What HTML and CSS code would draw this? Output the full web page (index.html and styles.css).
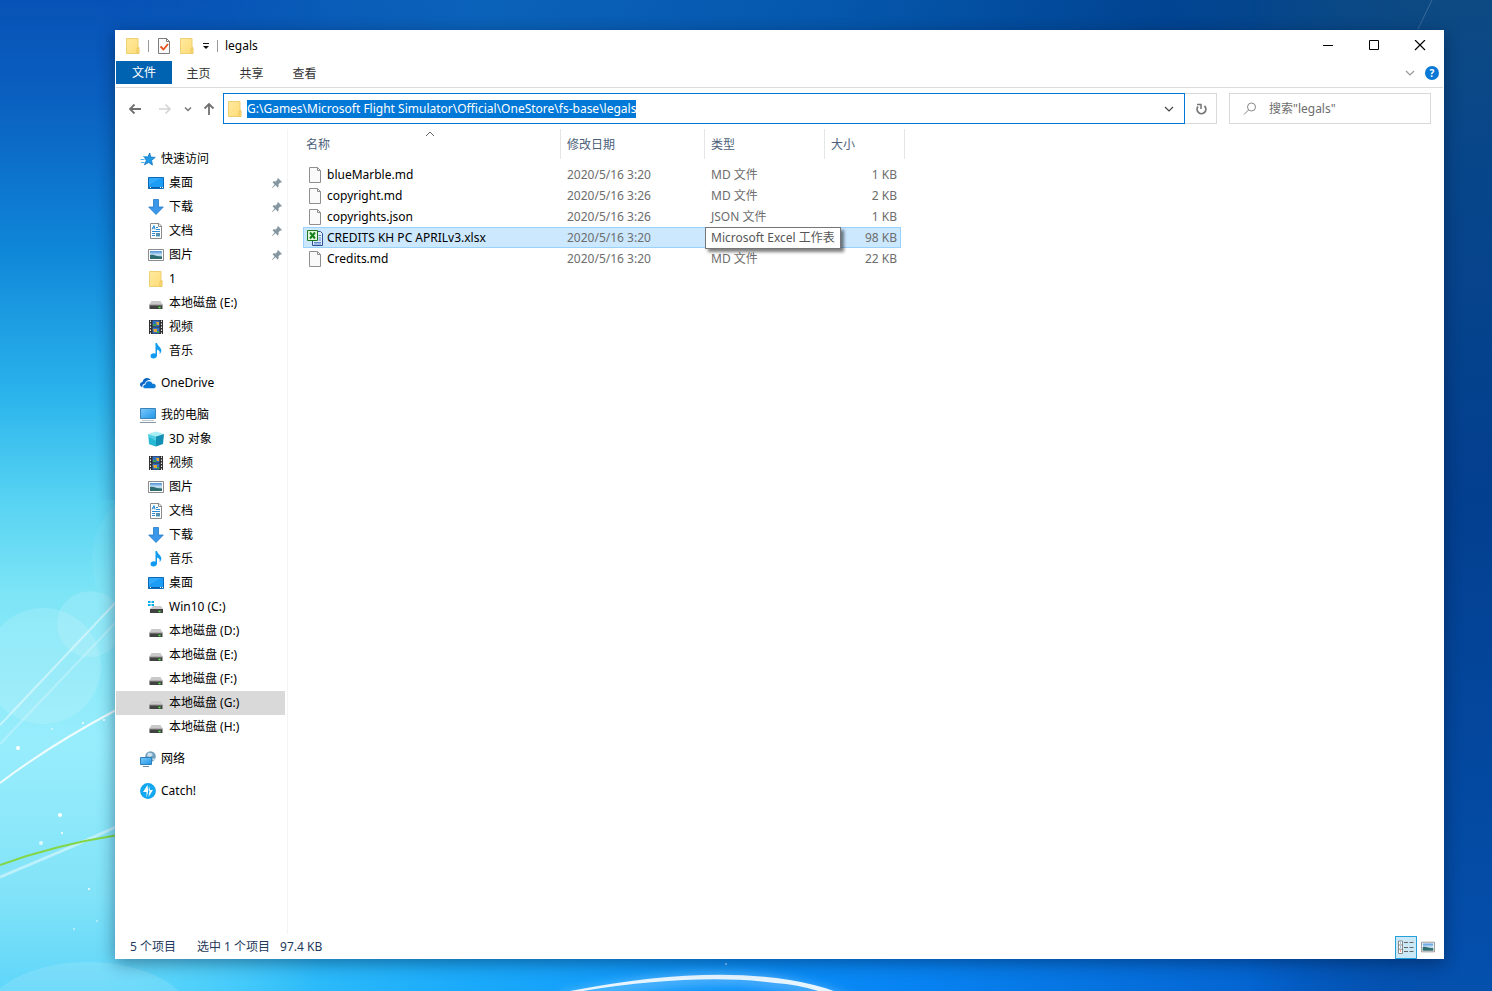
FILE: index.html
```html
<!DOCTYPE html>
<html lang="zh-CN">
<head>
<meta charset="utf-8">
<title>legals</title>
<link rel="stylesheet" href="styles.css">
</head>
<body>
<svg class="defs" aria-hidden="true">
  <defs>
    <linearGradient id="gFolder" x1="0" y1="0" x2="1" y2="1"><stop offset="0" stop-color="#ffeaa0"/><stop offset="1" stop-color="#ffdc78"/></linearGradient>
    <linearGradient id="gScreen" x1="0" y1="0" x2="1" y2="1"><stop offset="0" stop-color="#7cc9f8"/><stop offset="1" stop-color="#1f96ea"/></linearGradient>
    <linearGradient id="gPhoto" x1="0" y1="0" x2="0" y2="1"><stop offset="0" stop-color="#4a90d9"/><stop offset=".5" stop-color="#cfe8f5"/><stop offset="1" stop-color="#2f6f78"/></linearGradient>
    <symbol id="folder" viewBox="0 0 16 16"><path d="M1.500.5h11.500v15H1.500z" fill="url(#gFolder)" stroke="#efd070"/><path d="M12 10.500l2-1v6h-2z" fill="#ffdf80" stroke="#e8c55e"/></symbol>
    <symbol id="check" viewBox="0 0 16 16"><path d="M2.500.5h8l3 3v12h-11z" fill="#fbfbfb" stroke="#7b7b7b"/><path d="M10.500.5v3h3" fill="none" stroke="#7b7b7b"/><path d="M4.500 8.500l3 3L12 6" fill="none" stroke="#e8501c" stroke-width="1.800"/></symbol>
    <symbol id="star" viewBox="0 0 16 16"><path d="M9.800 2l.8 4 4.600.4-3.600 2.900.8 4.700-3.800-2.500-4.200 2.300 1.900-4.400L4.500 6.300l3.200-.2z" fill="#1e9be8" stroke="#1470b8" stroke-width=".8"/><path d="M3 5.500h4M.5 8.500h4M1 11.500h3.500" stroke="#4fb4ef"/></symbol>
    <symbol id="desktop" viewBox="0 0 16 16"><path d="M.5 2.500h15v11H.5z" fill="#1b9cf5" stroke="#0b6ab5"/><path d="M1 12.500h14" stroke="#0a5ea8"/><path d="M2 12.500h1M12 12.500h1m1 0h1" stroke="#fff"/><path d="M1 10L13 3H1z" fill="#42b0ff" opacity=".6"/></symbol>
    <symbol id="down" viewBox="0 0 16 16"><path d="M5.500.5h5v7.500h4.800L8 15.500.7 8h4.800z" fill="#3a97ea" stroke="#2378c4" stroke-width=".8"/></symbol>
    <symbol id="doc" viewBox="0 0 16 16"><path d="M2.500.5h8.500l2.500 2.500v12.500h-11z" fill="#fff" stroke="#8b8b8b"/><path d="M10.500.5v3h3" fill="none" stroke="#8b8b8b"/><path d="M4 6.500l2-4 1 4M4.500 5h2M8 4.500h2M8 6.500h4M4 8.500h8M4 10.500h3M4 12.500h3" fill="none" stroke="#2b8ad0"/><path d="M8 10h4v3.500H8z" fill="#4f93b5"/></symbol>
    <symbol id="picture" viewBox="0 0 16 16"><path d="M.5 2.500h15v11H.5z" fill="#fff" stroke="#8b8b8b"/><path d="M2 4h12v8H2z" fill="url(#gPhoto)"/><path d="M2 8c4-1 7 2 12 1.500V12H2z" fill="#2e6e70"/></symbol>
    <symbol id="drive" viewBox="0 0 16 16"><path d="M3.500 6h9L15 10H1z" fill="#c9c9c9"/><path d="M1.500 10h13v4h-13z" fill="#424242"/><path d="M1.500 10h13" stroke="#929292"/><path d="M10.500 12.500h2" stroke="#4cf04a" stroke-width="1.500"/></symbol>
    <symbol id="windrive" viewBox="0 0 16 16"><path d="M0 2h2.500v2H0zm3.500 0H6v2H3.500zM0 5h2.500v2H0zm3.500 0H6v2H3.500z" fill="#00adef"/><path d="M5 7h8l2 3H2z" fill="#c9c9c9"/><path d="M2 10h13v4H2z" fill="#424242"/><path d="M10.500 12.500h2" stroke="#4cf04a" stroke-width="1.500"/></symbol>
    <symbol id="video" viewBox="0 0 16 16"><path d="M1 1h14v14H1z" fill="#303030"/><path d="M2.500 1.500v14M13.500 1.500v14" stroke="#eee" stroke-dasharray="1.500 1.500"/><path d="M4.500 1.500h7v6h-7zM4.500 8.500h7v6h-7z" fill="#356fc5"/><path d="M8 3h3v3H9zM5 10h4v3H6z" fill="#e1aa37"/><path d="M5 5h3v2H5zM9 12h2v2H9z" fill="#3ba350"/></symbol>
    <symbol id="music" viewBox="0 0 16 16"><path d="M7.500 0h1.500c.4 3 4.800 4.500 4.300 8-.2 1.400-.9 2.500-1.800 3 .8-2.500-.2-3.800-2.500-4.500v6c0 2-1.800 3-3.600 3S2.500 14.500 2.500 13s1.600-2.800 3.500-2.700c.7 0 1.100.2 1.500.4z" fill="#109bf0"/></symbol>
    <symbol id="onedrive" viewBox="0 0 16 16"><path d="M1.800 12C.6 11.500 0 10.600 0 9.500 0 8 1.200 7 2.500 7 3 4.500 4.800 3 7 3c1.700 0 3 .8 3.700 2-3-.4-5 1-5.600 3.500C3 8.800 2 10.500 2.500 12.500z" fill="#0d67c2"/><path d="M5 13.500c-1.200 0-2-.9-2-2s.9-2.100 2.200-2.100C5.500 7.200 7 6 9 6c1.700 0 3 1 3.500 2.500 2.300-.2 3.500 1 3.500 2.500s-1 2.500-2.500 2.500z" fill="#0a78d6" stroke="#fff" stroke-width=".5"/></symbol>
    <symbol id="pc" viewBox="0 0 16 16"><path d="M.5 1.500h15v10H.5z" fill="url(#gScreen)" stroke="#3b82b8"/><path d="M2 13.500h12" stroke="#bfcbd4"/><path d="M0 15.500h16" stroke="#8295a3"/></symbol>
    <symbol id="cube" viewBox="0 0 16 16"><path d="M0 3l8-2.500L16 3 8 5.500z" fill="#a8eef5"/><path d="M0 3l8 2.500v10L1 13z" fill="#4fd0e2"/><path d="M16 3L8 5.500v10l7-2.500z" fill="#128fb5"/><path d="M1 6l7 4v5.500L1 13z" fill="#27b8d4"/></symbol>
    <symbol id="network" viewBox="0 0 16 16"><circle cx="10.500" cy="5.500" r="5.300" fill="#6f9fbd"/><path d="M8 2c2-.5 4 0 5 2l-3 2-3-1zM12 8l3-1-1 3z" fill="#cfe3ee"/><path d="M.5 6.500h11v7H.5z" fill="url(#gScreen)" stroke="#2f7fb8"/><path d="M3 15.500h6" stroke="#6b8ca3"/></symbol>
    <symbol id="catch" viewBox="0 0 16 16"><circle cx="8" cy="8" r="7.900" fill="#12a7ee"/><path d="M7.500 2L3 9h3.500v5.500L8 9V6.500zM9 3l-.5 4.500h1L8.500 14 13 7h-3z" fill="#fff"/></symbol>
    <symbol id="pin" viewBox="0 0 12 12"><path d="M7 1l4 4-1 .8-.8-.2L7.500 7.500l.2 2-1 1L4.500 8.300 1 11.200l-.3-.3L3.600 7.400 1.500 5.300l1-1 2 .2L6.400 2.800 6.200 2z" fill="#8797a2"/></symbol>
    <symbol id="file" viewBox="0 0 16 16"><path d="M2.500.5h8l3 3v12h-11z" fill="#fafafa" stroke="#8f8f8f"/><path d="M10.500.5v3h3" fill="none" stroke="#8f8f8f"/></symbol>
    <symbol id="excel" viewBox="0 0 16 16"><path d="M5.500 1.500h8l2 2v12h-10z" fill="#e3ecfa" stroke="#2f4f96"/><path d="M7 12.500h7M7 14h7M11.500 5.500H14M11.500 8H14M11.500 10H14" stroke="#5b87cc"/><path d="M.5.500h10v10H.5z" fill="#e6f5e1" stroke="#1c7a1a"/><path d="M3 2.500l5 6M8 2.500l-5 6" stroke="#16821b" stroke-width="2"/></symbol>
  </defs>
</svg>

<svg class="wallpaper" viewBox="0 0 1492 991" preserveAspectRatio="none" aria-hidden="true">
  <defs>
    <linearGradient id="wTop"><stop offset="0" stop-color="#0650b5"/><stop offset=".32" stop-color="#0b62b9"/><stop offset=".55" stop-color="#0558ae"/><stop offset=".78" stop-color="#014492"/><stop offset="1" stop-color="#0d4a83"/></linearGradient>
    <linearGradient id="wLeft" x1="0" y1="0" x2="0" y2="1"><stop offset="0" stop-color="#0752b6"/><stop offset=".1" stop-color="#0a60c0"/><stop offset=".25" stop-color="#0f86d8"/><stop offset=".4" stop-color="#2bb4ec"/><stop offset=".5" stop-color="#55d2f2"/><stop offset=".6" stop-color="#7de5f6"/><stop offset=".75" stop-color="#98edfc"/><stop offset=".9" stop-color="#82e3f8"/><stop offset="1" stop-color="#5fd6fa"/></linearGradient>
    <linearGradient id="wBottom"><stop offset="0" stop-color="#72ddf8"/><stop offset=".12" stop-color="#3cc9fb"/><stop offset=".3" stop-color="#1cacfa"/><stop offset=".5" stop-color="#0a90fa"/><stop offset=".62" stop-color="#0782f0"/><stop offset=".85" stop-color="#0463cf"/><stop offset="1" stop-color="#0450ad"/></linearGradient>
    <linearGradient id="wRight" x1="0" y1="0" x2="0" y2="1"><stop offset="0" stop-color="#0d4a83"/><stop offset=".15" stop-color="#08468a"/><stop offset=".5" stop-color="#033f8f"/><stop offset="1" stop-color="#0450ad"/></linearGradient>
    <linearGradient id="fadeL"><stop offset="0" stop-color="#fff"/><stop offset=".3" stop-color="#fff"/><stop offset="1" stop-color="#000"/></linearGradient>
    <linearGradient id="fadeR"><stop offset="0" stop-color="#000"/><stop offset=".7" stop-color="#fff"/><stop offset="1" stop-color="#fff"/></linearGradient>
    <mask id="maskL"><path d="M0 0h320v991H0z" fill="url(#fadeL)"/></mask>
    <mask id="maskR"><path d="M1250 0h242v991h-242z" fill="url(#fadeR)"/></mask>
    <filter id="soft" x="-20%" y="-50%" width="140%" height="200%"><feGaussianBlur stdDeviation="6"/></filter>
  </defs>
  <path d="M0 0h1492v500H0z" fill="url(#wTop)"/>
  <path d="M0 500h1492v491H0z" fill="url(#wBottom)"/>
  <path d="M0 0h320v991H0z" fill="url(#wLeft)" mask="url(#maskL)"/>
  <path d="M1250 0h242v991h-242z" fill="url(#wRight)" mask="url(#maskR)"/>
  <g fill="#fff">
    <circle cx="43" cy="666" r="58" opacity=".13"/>
    <circle cx="90" cy="624" r="33" opacity=".13"/>
    <circle cx="170" cy="560" r="78" opacity=".05"/>
    <ellipse cx="88" cy="1020" rx="105" ry="58" opacity=".12"/>
    <circle cx="18" cy="748" r="2"/><circle cx="60" cy="815" r="2"/><circle cx="62" cy="833" r="1"/><circle cx="41" cy="843" r="2" opacity=".7"/><circle cx="83" cy="723" r="1"/><circle cx="104" cy="720" r="1"/><circle cx="52" cy="729" r="1" opacity=".6"/><circle cx="89" cy="889" r="1"/><circle cx="74" cy="929" r="1" opacity=".6"/><circle cx="97" cy="921" r="1" opacity=".5"/><circle cx="726" cy="964" r="1" opacity=".6"/>
  </g>
  <g fill="none" stroke="#fff">
    <path d="M0 725L118 600" stroke-width="2" opacity=".45"/>
    <path d="M0 744L118 620" stroke-width="2" opacity=".25"/>
    <path d="M0 783Q50 745 118 709" stroke-width="2" opacity=".85"/>
    <path d="M0 877Q70 848 118 826" stroke-width="3" opacity=".45"/>
    <path d="M1418 29L1432 0" opacity=".18"/>
    <path d="M560 1000Q700 968 780 984T850 1010" stroke="#9fd6ff" stroke-width="8" filter="url(#soft)" opacity=".7"/>
  </g>
  <path d="M0 865Q55 845 118 835" fill="none" stroke="#83d645" stroke-width="2"/>
  <path d="M565 992Q700 965 790 980Q825 986 846 996L832 996Q805 985 775 983Q690 972 565 994z" fill="#e6f5ff"/>
</svg>

<main class="window">
  <header class="titlebar">
    <div class="quick">
      <svg class="ico"><use href="#folder"/></svg>
      <i class="sep"></i>
      <button class="flat" aria-label="属性"><svg class="ico"><use href="#check"/></svg></button>
      <button class="flat" aria-label="新建文件夹"><svg class="ico"><use href="#folder"/></svg></button>
      <button class="flat" aria-label="自定义快速访问工具栏"><svg class="caret" viewBox="0 0 8 8"><path d="M1 1.500h6" stroke="#111"/><path d="M1 4h6L4 7z" fill="#111"/></svg></button>
      <i class="sep"></i>
      <h1 class="title">legals</h1>
    </div>
    <div class="controls">
      <button class="ctl" aria-label="最小化"><svg viewBox="0 0 12 12"><path d="M1 5.500h10" stroke="#000"/></svg></button>
      <button class="ctl" aria-label="最大化"><svg viewBox="0 0 12 12"><path d="M1.500.5h9v9h-9z" fill="none" stroke="#000"/></svg></button>
      <button class="ctl" aria-label="关闭"><svg viewBox="0 0 12 12"><path d="M1 0l10 10M11 0L1 10" stroke="#000" stroke-width="1.200"/></svg></button>
    </div>
  </header>

  <nav class="ribbon">
    <button class="tab tab-file">文件</button>
    <button class="tab">主页</button>
    <button class="tab">共享</button>
    <button class="tab">查看</button>
    <span class="grow"></span>
    <button class="flat" aria-label="展开功能区"><svg class="chev" viewBox="0 0 10 10"><path d="M1 3l4 4 4-4" fill="none" stroke="#999" stroke-width="1.200"/></svg></button>
    <button class="help" aria-label="帮助">?</button>
  </nav>

  <div class="addressbar">
    <div class="history">
      <button class="flat" aria-label="后退"><svg class="arrow" viewBox="0 0 14 14"><path d="M13 7H2M6.500 2.500L2 7l4.500 4.500" fill="none" stroke="#707070" stroke-width="1.800"/></svg></button>
      <button class="flat" aria-label="前进"><svg class="arrow" viewBox="0 0 14 14"><path d="M1 7h11M7.500 2.500L12 7l-4.500 4.500" fill="none" stroke="#d4d4d4" stroke-width="1.600"/></svg></button>
      <button class="flat" aria-label="最近位置"><svg class="caret" viewBox="0 0 8 8"><path d="M1 2.500l3 3 3-3" fill="none" stroke="#777" stroke-width="1.500"/></svg></button>
      <button class="flat" aria-label="上移"><svg class="arrow" viewBox="0 0 14 14"><path d="M7 13V2M2.500 6.500L7 2l4.500 4.500" fill="none" stroke="#707070" stroke-width="1.800"/></svg></button>
    </div>
    <div class="pathbox">
      <svg class="ico"><use href="#folder"/></svg>
      <input class="path" type="text" aria-label="地址" size="60" value="G:\Games\Microsoft Flight Simulator\Official\OneStore\fs-base\legals">
      <span class="grow"></span>
      <button class="flat" aria-label="以前的位置"><svg class="chev" viewBox="0 0 10 10"><path d="M1 3l4 4 4-4" fill="none" stroke="#444" stroke-width="1.200"/></svg></button>
    </div>
    <button class="refresh" aria-label="刷新"><svg class="arrow" viewBox="0 0 14 14"><path d="M10.500 4A4.400 4.400 0 1 1 4 4.500" fill="none" stroke="#777" stroke-width="1.800"/><path d="M3 2.500h4V7" fill="none" stroke="#777" stroke-width="1.500"/></svg></button>
    <label class="search">
      <svg class="arrow" viewBox="0 0 14 14"><circle cx="8.500" cy="5" r="4" fill="none" stroke="#888"/><path d="M5.500 8L1 12.500" stroke="#888"/></svg>
      <input type="search" aria-label="搜索" placeholder='搜索"legals"'>
    </label>
  </div>

  <div class="content">
    <aside class="tree">
      <ul class="group">
        <li class="node root"><svg class="ico"><use href="#star"/></svg><a href="#">快速访问</a></li>
        <li class="node"><svg class="ico"><use href="#desktop"/></svg><a href="#">桌面</a><svg class="pin"><use href="#pin"/></svg></li>
        <li class="node"><svg class="ico"><use href="#down"/></svg><a href="#">下载</a><svg class="pin"><use href="#pin"/></svg></li>
        <li class="node"><svg class="ico"><use href="#doc"/></svg><a href="#">文档</a><svg class="pin"><use href="#pin"/></svg></li>
        <li class="node"><svg class="ico"><use href="#picture"/></svg><a href="#">图片</a><svg class="pin"><use href="#pin"/></svg></li>
        <li class="node"><svg class="ico"><use href="#folder"/></svg><a href="#">1</a></li>
        <li class="node"><svg class="ico"><use href="#drive"/></svg><a href="#">本地磁盘 (E:)</a></li>
        <li class="node"><svg class="ico"><use href="#video"/></svg><a href="#">视频</a></li>
        <li class="node"><svg class="ico"><use href="#music"/></svg><a href="#">音乐</a></li>
      </ul>
      <ul class="group">
        <li class="node root"><svg class="ico"><use href="#onedrive"/></svg><a href="#">OneDrive</a></li>
      </ul>
      <ul class="group">
        <li class="node root"><svg class="ico"><use href="#pc"/></svg><a href="#">我的电脑</a></li>
        <li class="node"><svg class="ico"><use href="#cube"/></svg><a href="#">3D 对象</a></li>
        <li class="node"><svg class="ico"><use href="#video"/></svg><a href="#">视频</a></li>
        <li class="node"><svg class="ico"><use href="#picture"/></svg><a href="#">图片</a></li>
        <li class="node"><svg class="ico"><use href="#doc"/></svg><a href="#">文档</a></li>
        <li class="node"><svg class="ico"><use href="#down"/></svg><a href="#">下载</a></li>
        <li class="node"><svg class="ico"><use href="#music"/></svg><a href="#">音乐</a></li>
        <li class="node"><svg class="ico"><use href="#desktop"/></svg><a href="#">桌面</a></li>
        <li class="node"><svg class="ico"><use href="#windrive"/></svg><a href="#">Win10 (C:)</a></li>
        <li class="node"><svg class="ico"><use href="#drive"/></svg><a href="#">本地磁盘 (D:)</a></li>
        <li class="node"><svg class="ico"><use href="#drive"/></svg><a href="#">本地磁盘 (E:)</a></li>
        <li class="node"><svg class="ico"><use href="#drive"/></svg><a href="#">本地磁盘 (F:)</a></li>
        <li class="node current"><svg class="ico"><use href="#drive"/></svg><a href="#">本地磁盘 (G:)</a></li>
        <li class="node"><svg class="ico"><use href="#drive"/></svg><a href="#">本地磁盘 (H:)</a></li>
      </ul>
      <ul class="group">
        <li class="node root"><svg class="ico"><use href="#network"/></svg><a href="#">网络</a></li>
      </ul>
      <ul class="group">
        <li class="node root"><svg class="ico"><use href="#catch"/></svg><a href="#">Catch!</a></li>
      </ul>
    </aside>

    <section class="listing">
      <table class="files">
        <colgroup><col class="c-name"><col class="c-date"><col class="c-type"><col class="c-size"><col class="c-edge"></colgroup>
        <thead>
          <tr><th>名称<svg class="sort" viewBox="0 0 10 10"><path d="M1 7l4-4 4 4" fill="none" stroke="#666"/></svg></th><th>修改日期</th><th>类型</th><th colspan="2">大小</th></tr>
        </thead>
        <tbody>
          <tr><td><div class="fname"><svg class="ico"><use href="#file"/></svg>blueMarble.md</div></td><td>2020/5/16 3:20</td><td>MD 文件</td><td>1 KB</td></tr>
          <tr><td><div class="fname"><svg class="ico"><use href="#file"/></svg>copyright.md</div></td><td>2020/5/16 3:26</td><td>MD 文件</td><td>2 KB</td></tr>
          <tr><td><div class="fname"><svg class="ico"><use href="#file"/></svg>copyrights.json</div></td><td>2020/5/16 3:26</td><td>JSON 文件</td><td>1 KB</td></tr>
          <tr class="selected"><td><div class="fname"><svg class="ico"><use href="#excel"/></svg>CREDITS KH PC APRILv3.xlsx</div></td><td>2020/5/16 3:20</td><td><span class="tip" role="tooltip">Microsoft Excel 工作表</span></td><td>98 KB</td></tr>
          <tr><td><div class="fname"><svg class="ico"><use href="#file"/></svg>Credits.md</div></td><td>2020/5/16 3:20</td><td>MD 文件</td><td>22 KB</td></tr>
        </tbody>
      </table>
    </section>
  </div>

  <footer class="status">
    <span class="count">5 个项目</span>
    <span class="chosen">选中 1 个项目</span>
    <span class="size">97.4 KB</span>
    <span class="grow"></span>
    <button class="view on" aria-label="详细信息"><svg class="ico" viewBox="0 0 16 16"><path d="M.5 2v12.500h4V2z" fill="#fff" stroke="#888"/><path d="M.5 6h4m-4 4.200h4" stroke="#888"/><path d="M2 4h1M2 8h1" stroke="#2b8ad0"/><path d="M2 12h1" stroke="#e33"/><path d="M6 3.500h4m1.500 0h4M6 8.500h4m1.500 0h4M6 12.500h4m1.500 0h4" stroke="#666"/></svg></button>
    <button class="view" aria-label="大缩略图"><svg class="ico"><use href="#picture"/></svg></button>
  </footer>
</main>
</body>
</html>
```
FILE: styles.css
```css
* { box-sizing: border-box; }

body {
  margin: 0;
  min-height: 100vh;
  padding: 30px 48px 32px 115px;
  display: flex;
  background: #0b62b9;
  color: #000;
  font: 12px/20px "Noto Sans", "Noto Sans CJK SC", sans-serif;
}

button, input { font: inherit; color: inherit; border: 0; padding: 0; margin: 0; background: none; }
a { color: inherit; text-decoration: none; }

.defs { position: absolute; width: 0; height: 0; }
.wallpaper { position: absolute; inset: 0; width: 100%; height: 100%; }

.window {
  position: relative;
  flex: 1;
  display: flex;
  flex-direction: column;
  background: #fff;
  padding: 0 1px;
  box-shadow: 0 4px 16px rgba(0, 20, 50, .45);
}

.ico { width: 16px; height: 16px; flex: none; display: block; }
.caret { width: 8px; height: 8px; display: block; }
.chev { width: 10px; height: 10px; display: block; }
.arrow { width: 14px; height: 14px; display: block; }
.flat { display: flex; align-items: center; }
.grow { flex: 1; }

.titlebar { display: flex; justify-content: space-between; height: 31px; }
.quick { display: flex; align-items: center; gap: 7px; padding-left: 9px; }
.sep { width: 1px; height: 12px; background: #999; }
.title { margin: 0; font-size: 12px; line-height: 20px; font-weight: 400; }
.controls { display: flex; }
.ctl { width: 46px; display: grid; place-items: center; }
.ctl svg { width: 12px; height: 12px; }

.ribbon { display: flex; align-items: center; height: 27px; padding: 0 4px 3px 0; border-bottom: 1px solid #dadbdc; }
.tab { width: 53px; height: 23px; padding-top: 2px; line-height: 21px; color: #333; }
.tab-file { width: 56px; padding-top: 0; background: #0063b1; color: #fff; }
.help { width: 14px; height: 14px; margin-left: 10px; border-radius: 50%; background: #0a78d7; color: #fff; font-size: 10px; line-height: 14px; font-weight: 700; }

.addressbar { display: flex; height: 41px; padding: 5px 12px 5px 0; }
.history { width: 107px; display: flex; align-items: center; gap: 14px; padding-left: 12px; }
.history .flat:nth-child(2) { margin-left: 2px; }
.history .flat:nth-child(3) { margin-left: -2px; }
.history .flat:last-child { margin-left: -4px; }
.pathbox { flex: 1; display: flex; align-items: center; padding: 0 10px 0 3px; border: 1px solid #0078d7; }
.path { field-sizing: content; height: 18px; margin-left: 4px; background: #0078d7; color: #fff; }
.refresh { width: 32px; display: grid; place-items: center; border: 1px solid #d9d9d9; border-left: 0; }
.search { width: 202px; display: flex; align-items: center; gap: 12px; margin-left: 12px; padding-left: 13px; border: 1px solid #d9d9d9; }
.search input { width: 140px; outline: 0; }
.search input::placeholder { color: #6d6d6d; opacity: 1; }

.content { flex: 1; display: flex; }
.tree { width: 172px; padding-top: 18px; border-right: 1px solid #f4f4f4; }
.group { list-style: none; margin: 0 2px 8px 0; padding: 0; }
.node { display: flex; align-items: center; gap: 5px; height: 24px; padding: 0 2px 0 32px; }
.root { padding-left: 24px; }
.current { background: #d9d9d9; }
.node a { flex: 1; }
.pin { width: 12px; height: 12px; }

.listing { flex: 1; padding-left: 15px; }
.files { table-layout: fixed; width: 602px; border-collapse: separate; border-spacing: 0; color: #6d6d6d; }
.c-name { width: 258px; }
.c-date { width: 144px; }
.c-type { width: 120px; }
.c-size { width: 76px; }
.c-edge { width: 4px; }
.files th { position: relative; height: 30px; padding: 2px 6px 0 3px; border-right: 1px solid #e5e5e5; color: #4c607a; font-weight: 400; text-align: left; }
.files th + th { padding-left: 6px; }
.sort { position: absolute; left: 122px; top: 0; width: 10px; height: 10px; }
.files thead::after { content: ""; display: block; height: 5px; }
.files td { position: relative; height: 21px; padding: 0 6px; line-height: 19px; border: solid transparent; border-width: 1px 0; white-space: nowrap; }
.files td:first-child { padding-left: 3px; border-left-width: 1px; }
.files td:nth-child(4) { padding-right: 3px; border-right-width: 1px; text-align: right; }
.fname { display: flex; align-items: center; gap: 4px; color: #000; }
.files .selected td { background: #cce8ff; border-color: #99d1ff; }
.tip { position: absolute; left: 0; top: -1px; z-index: 1; height: 22px; padding: 0 5px; line-height: 20px; border: 1px solid #767676; background: #fff; color: #575757; box-shadow: 3px 3px 3px rgba(0, 0, 0, .5); }

.status { display: flex; align-items: center; height: 25px; padding: 1px 4px 0 14px; color: #1e395b; }
.count { margin-right: 21px; }
.chosen { margin-right: 10px; }
.view { width: 22px; height: 23px; display: grid; place-items: center; }
.view .ico { width: 14px; height: 14px; }
.on { border: 1px solid #26a0da; background: #cbe8f6; }
.on .ico { width: 16px; height: 16px; }
```
